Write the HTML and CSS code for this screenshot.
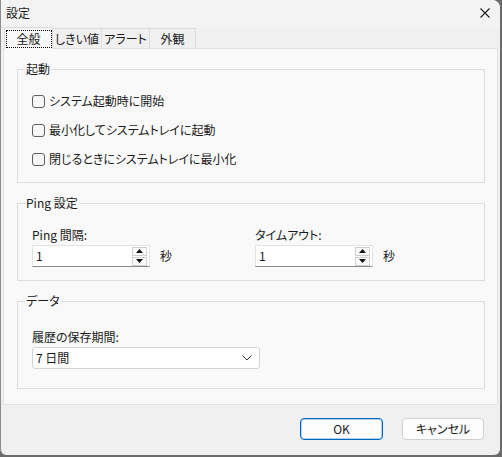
FILE: index.html
```html
<!DOCTYPE html>
<html>
<head>
    <meta charset="UTF-8">
    <title>設定</title>
    <link rel="stylesheet" href="styles.css">
</head>
<body>
<div class="window">
    <div class="titlebar">
        <span class="title">設定</span>
        <span class="close">
            <svg width="10" height="10" viewBox="0 0 10 10"><path d="M0.5 0.5L9.5 9.5M9.5 0.5L0.5 9.5" stroke="#1a1a1a" stroke-width="1.1" fill="none"/></svg>
        </span>
    </div>

    <div class="tabs">
        <div class="tab active"><span class="focus">全般</span></div>
        <div class="tab">しきい値</div>
        <div class="tab">アラート</div>
        <div class="tab">外観</div>
    </div>

    <div class="panel">
        <fieldset class="group">
            <legend>起動</legend>
            <div class="checks">
                <label class="check"><em class="box"></em>システム起動時に開始</label>
                <label class="check"><em class="box"></em>最小化してシステムトレイに起動</label>
                <label class="check"><em class="box"></em>閉じるときにシステムトレイに最小化</label>
            </div>
        </fieldset>

        <fieldset class="group ping">
            <legend>Ping 設定</legend>
            <div class="fields">
                <div class="field">
                    <div class="label">Ping 間隔:</div>
                    <div class="spinRow">
                        <div class="spin">
                            <span class="value">1</span>
                            <div class="arrows">
                                <span class="arrow"><svg width="7" height="4" viewBox="0 0 7 4"><path d="M3.5 0L7 4H0Z" fill="#111"/></svg></span>
                                <span class="arrow"><svg width="7" height="4" viewBox="0 0 7 4"><path d="M0 0H7L3.5 4Z" fill="#111"/></svg></span>
                            </div>
                        </div>
                        <span class="unit">秒</span>
                    </div>
                </div>
                <div class="field">
                    <div class="label">タイムアウト:</div>
                    <div class="spinRow">
                        <div class="spin">
                            <span class="value">1</span>
                            <div class="arrows">
                                <span class="arrow"><svg width="7" height="4" viewBox="0 0 7 4"><path d="M3.5 0L7 4H0Z" fill="#111"/></svg></span>
                                <span class="arrow"><svg width="7" height="4" viewBox="0 0 7 4"><path d="M0 0H7L3.5 4Z" fill="#111"/></svg></span>
                            </div>
                        </div>
                        <span class="unit">秒</span>
                    </div>
                </div>
            </div>
        </fieldset>

        <fieldset class="group data">
            <legend>データ</legend>
            <div class="label">履歴の保存期間:</div>
            <div class="combo">
                <span class="value">7 日間</span>
                <svg width="10" height="6" viewBox="0 0 10 6"><path d="M0.5 0.5L5 5L9.5 0.5" stroke="#333" stroke-width="1" fill="none"/></svg>
            </div>
        </fieldset>
    </div>

    <div class="footer">
        <div class="btn primary">OK</div>
        <div class="btn">キャンセル</div>
    </div>
</div>
</body>
</html>
```

FILE: styles.css
```css
* {
    margin: 0;
    padding: 0;
    box-sizing: border-box;
}

html, body {
    width: 502px;
    height: 457px;
    overflow: hidden;
}

body {
    background: #6b6b6b;
    font-family: "Noto Sans CJK JP", "Noto Sans", sans-serif;
    font-feature-settings: "palt";
    font-size: 12px;
    color: #1a1a1a;
}

.window {
    display: flex;
    flex-direction: column;
    width: 500px;
    height: 455px;
    background: #f0f0f0;
    border-left: 1px solid #8c8c8c;
    border-radius: 0 8px 6px 6px;
    overflow: hidden;
}

.titlebar {
    display: flex;
    align-items: center;
    justify-content: space-between;
    height: 27px;
    padding: 0 10px 2px 5px;
    background: #f3f3f3;
}

.title {
    font-size: 12px;
    line-height: 16px;
}

.close {
    display: flex;
}

.tabs {
    display: flex;
    align-items: flex-end;
    height: 21px;
    padding-left: 3px;
}

.tab {
    display: flex;
    align-items: center;
    justify-content: center;
    height: 20px;
    margin-left: -1px;
    border: 1px solid #dcdcdc;
    border-bottom: none;
    background: #f0f0f0;
    line-height: 16px;
}

.tab:nth-child(2) {
    width: 50px;
}

.tab:nth-child(3) {
    width: 49px;
}

.tab:nth-child(4) {
    width: 47px;
}

.tab.active {
    position: relative;
    z-index: 1;
    width: 49px;
    height: 22px;
    margin: 0 0 -1px 0;
    background: #f9f9f9;
}

.focus {
    display: flex;
    align-items: center;
    justify-content: center;
    width: 46px;
    height: 18px;
    border: 1px dotted #000;
}

.panel {
    display: flex;
    flex-direction: column;
    gap: 12px;
    height: 357px;
    margin: 0 2px 0 2px;
    padding: 12px 12px 0 13px;
    background: #f9f9f9;
    border: 1px solid #e2e2e2;
}

.group {
    padding: 14px 14px 13px 14px;
    border: 1px solid #dcdcdc;
}

.group legend {
    margin-left: -7px;
    padding: 0 1px;
    line-height: 16px;
}

.checks {
    display: flex;
    flex-direction: column;
    gap: 9px;
}

.check {
    display: flex;
    align-items: center;
    gap: 4px;
    height: 20px;
    line-height: 16px;
}

.box {
    width: 13px;
    height: 13px;
    border: 1px solid #5f5f5f;
    border-radius: 3px;
    background: #f6f6f6;
}

.ping {
    padding: 16px 14px 13px 14px;
}

.fields {
    display: grid;
    grid-template-columns: 223px 1fr;
}

.label {
    margin-bottom: 2px;
    line-height: 16px;
}

.spinRow {
    display: flex;
    align-items: center;
    gap: 10px;
}

.spin {
    display: flex;
    align-items: center;
    justify-content: space-between;
    width: 118px;
    height: 22px;
    padding: 0 2px 0 3px;
    background: #fff;
    border: 1px solid #e3e3e3;
    border-bottom: 1px solid #8a8a8a;
}

.value {
    line-height: 16px;
}

.arrows {
    display: flex;
    flex-direction: column;
    gap: 1px;
}

.arrow {
    display: flex;
    align-items: center;
    justify-content: center;
    width: 15px;
    height: 9px;
    border: 1px solid #cfcfcf;
    background: #fbfbfb;
}

.unit {
    line-height: 16px;
}

.data {
    padding: 20px 14px 19px 14px;
}

.combo {
    display: flex;
    align-items: center;
    justify-content: space-between;
    width: 228px;
    height: 22px;
    padding: 0 7px 0 3px;
    background: #fff;
    border: 1px solid #d4d4d4;
    border-radius: 3px;
}

.footer {
    display: flex;
    justify-content: flex-end;
    align-items: flex-start;
    gap: 19px;
    flex: 1;
    padding: 13px 16px 0 0;
}

.btn {
    display: flex;
    align-items: center;
    justify-content: center;
    width: 82px;
    height: 22px;
    background: #fdfdfd;
    border: 1px solid #d0d0d0;
    border-radius: 4px;
    line-height: 16px;
}

.btn.primary {
    width: 83px;
    border: 1px solid #0067c0;
    box-shadow: inset 0 0 0 1px rgba(0, 103, 192, 0.3);
}
```
